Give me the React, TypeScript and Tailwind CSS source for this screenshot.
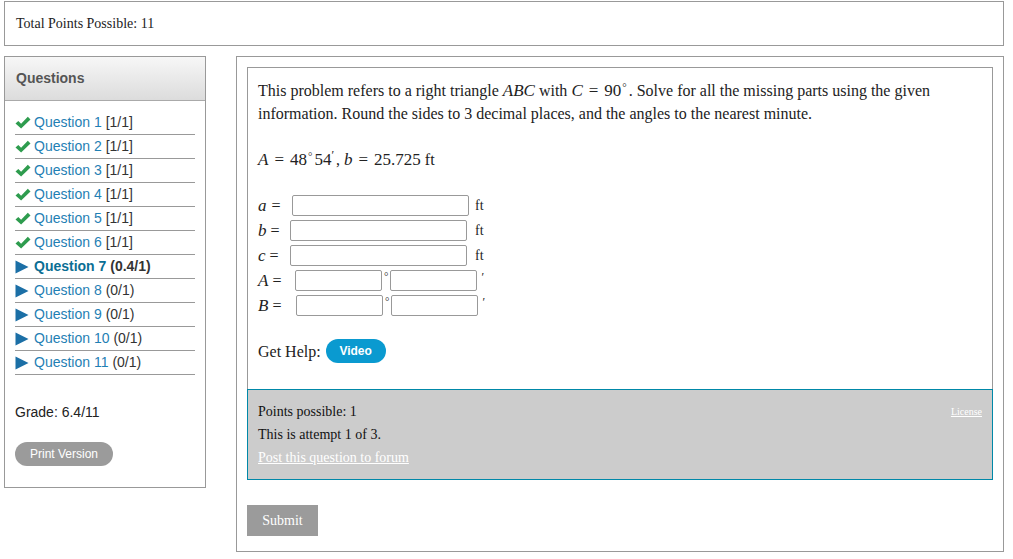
import React from 'react';

const serif = { fontFamily: '"Liberation Serif", "Times New Roman", serif' };
const sans = { fontFamily: '"Liberation Sans", Arial, sans-serif' };

interface Q {
  n: number;
  score: string;
  done: boolean;
  current?: boolean;
}

const QUESTIONS: Q[] = [
  { n: 1, score: '[1/1]', done: true },
  { n: 2, score: '[1/1]', done: true },
  { n: 3, score: '[1/1]', done: true },
  { n: 4, score: '[1/1]', done: true },
  { n: 5, score: '[1/1]', done: true },
  { n: 6, score: '[1/1]', done: true },
  { n: 7, score: '(0.4/1)', done: false, current: true },
  { n: 8, score: '(0/1)', done: false },
  { n: 9, score: '(0/1)', done: false },
  { n: 10, score: '(0/1)', done: false },
  { n: 11, score: '(0/1)', done: false },
];

const Check = () => (
  <svg width="16" height="14" viewBox="0 0 16 14" className="shrink-0">
    <path d="M0.5 7.6 L3.3 5 L6.1 7.7 L12.8 0.8 L15.5 3.4 L6.1 12.6 Z" fill="#2e9c4e" />
  </svg>
);

const Arrow = () => (
  <svg width="16" height="14" viewBox="0 0 16 14" className="shrink-0">
    <path d="M0.5 0.5 L13.5 7 L0.5 13.5 Z" fill="#1b6fa6" />
  </svg>
);

const V = ({ children }: { children: React.ReactNode }) => <i className="italic text-[17px]">{children}</i>;
const Eq = () => <span className="mx-[6px] text-[17px]">=</span>;
const Deg = () => <sup className="text-[11px] ml-[1px] mr-[2px]">°</sup>;

const Field = ({ w }: { w: string }) => (
  <input className={`${w} h-[21px] border border-[#999] rounded-[2px] bg-white`} />
);

const Sidebar = () => (
  <div className="w-[202px] h-[432px] border border-[#999] bg-white shrink-0" style={sans}>
    <div className="h-[44px] border-b border-[#aaa] bg-gradient-to-b from-[#f7f7f7] to-[#dcdcdc] flex items-center pl-[11px]">
      <span className="text-[14px] font-bold text-[#555]">Questions</span>
    </div>
    <ul className="mt-[10px] ml-[10px] w-[180px]">
      {QUESTIONS.map((q) => (
        <li key={q.n} className="h-[24px] border-b border-[#999] flex items-center gap-[3px] text-[14px]">
          {q.done ? <Check /> : <Arrow />}
          <span className={q.current ? 'font-bold' : ''}>
            <span className={q.current ? 'text-[#0b6e94]' : 'text-[#1f80b4]'}>Question {q.n}</span>{' '}
            <span className="text-[#333]">{q.score}</span>
          </span>
        </li>
      ))}
    </ul>
    <div className="mt-[27px] ml-[10px] text-[14px] text-[#222]">Grade: 6.4/11</div>
    <button className="mt-[19px] ml-[10px] w-[98px] h-[24px] rounded-full bg-[#9b9b9b] text-white text-[12px]">
      Print Version
    </button>
  </div>
);

const QuestionBox = () => (
  <div className="w-[746px]" style={serif}>
    <div className="border border-b-0 border-[#999] bg-white px-[10px] pt-[11px] pb-[26px] text-[16px] leading-[23px] text-[#222]">
      <p>
        This problem refers to a right triangle <V>ABC</V> with <V>C</V>
        <Eq />
        <span className="text-[17px]">90</span>
        <Deg />. Solve for all the missing parts using the given information. Round the sides to 3 decimal places, and
        the angles to the nearest minute.
      </p>
      <p className="mt-[23px]">
        <V>A</V>
        <Eq />
        <span className="text-[17px]">48</span>
        <Deg />
        <span className="text-[17px]">54</span>
        <sup className="text-[12px] mr-[2px]">′</sup>, <V>b</V>
        <Eq />
        <span className="text-[17px]">25.725</span> ft
      </p>
      <div className="mt-[24px] flex flex-col gap-[4px]">
        <div className="flex items-center h-[21px]">
          <span className="w-[34px]"><V>a</V><span className="ml-[5px]">=</span></span>
          <Field w="w-[177px]" />
          <span className="ml-[6px] text-[14px]">ft</span>
        </div>
        <div className="flex items-center h-[21px]">
          <span className="w-[32px]"><V>b</V><span className="ml-[4px]">=</span></span>
          <Field w="w-[177px]" />
          <span className="ml-[8px] text-[14px]">ft</span>
        </div>
        <div className="flex items-center h-[21px]">
          <span className="w-[32px]"><V>c</V><span className="ml-[4px]">=</span></span>
          <Field w="w-[177px]" />
          <span className="ml-[8px] text-[14px]">ft</span>
        </div>
        <div className="flex items-center h-[21px]">
          <span className="w-[37px]"><V>A</V><span className="ml-[4px]">=</span></span>
          <Field w="w-[87px]" />
          <span className="mx-[2px] text-[11px] -mt-[8px]">°</span>
          <Field w="w-[87px]" />
          <span className="ml-[4px] text-[12px] -mt-[6px]">′</span>
        </div>
        <div className="flex items-center h-[21px]">
          <span className="w-[38px]"><V>B</V><span className="ml-[4px]">=</span></span>
          <Field w="w-[87px]" />
          <span className="mx-[2px] text-[11px] -mt-[8px]">°</span>
          <Field w="w-[87px]" />
          <span className="ml-[4px] text-[12px] -mt-[6px]">′</span>
        </div>
      </div>
      <div className="mt-[23px] flex items-center gap-[5px]">
        <span>Get Help:</span>
        <button className="w-[60px] h-[24px] rounded-full bg-[#0a9ad0] text-white text-[12px] font-bold" style={sans}>
          Video
        </button>
      </div>
    </div>
    <div className="h-[91px] border border-[#0088a8] bg-[#cccccc] px-[10px] pt-[10px] text-[14px] leading-[23px] text-[#111]">
      <div className="flex justify-between">
        <span>Points possible: 1</span>
        <a className="text-[10px] text-white underline">License</a>
      </div>
      <div>This is attempt 1 of 3.</div>
      <a className="text-white underline">Post this question to forum</a>
    </div>
  </div>
);

export default function App() {
  return (
    <div className="w-[1013px] h-[559px] bg-white pt-[1px] px-[4px]">
      <div className="w-[1000px] h-[45px] border border-[#999] flex items-center pl-[11px] text-[14px] text-[#222]" style={serif}>
        Total Points Possible: 11
      </div>
      <div className="mt-[10px] flex items-start gap-[30px]">
        <Sidebar />
        <div className="w-[768px] h-[496px] border border-[#999] p-[10px]">
          <QuestionBox />
          <button className="mt-[25px] w-[71px] h-[31px] bg-[#9b9b9b] text-white text-[14px]" style={serif}>
            Submit
          </button>
        </div>
      </div>
    </div>
  );
}
